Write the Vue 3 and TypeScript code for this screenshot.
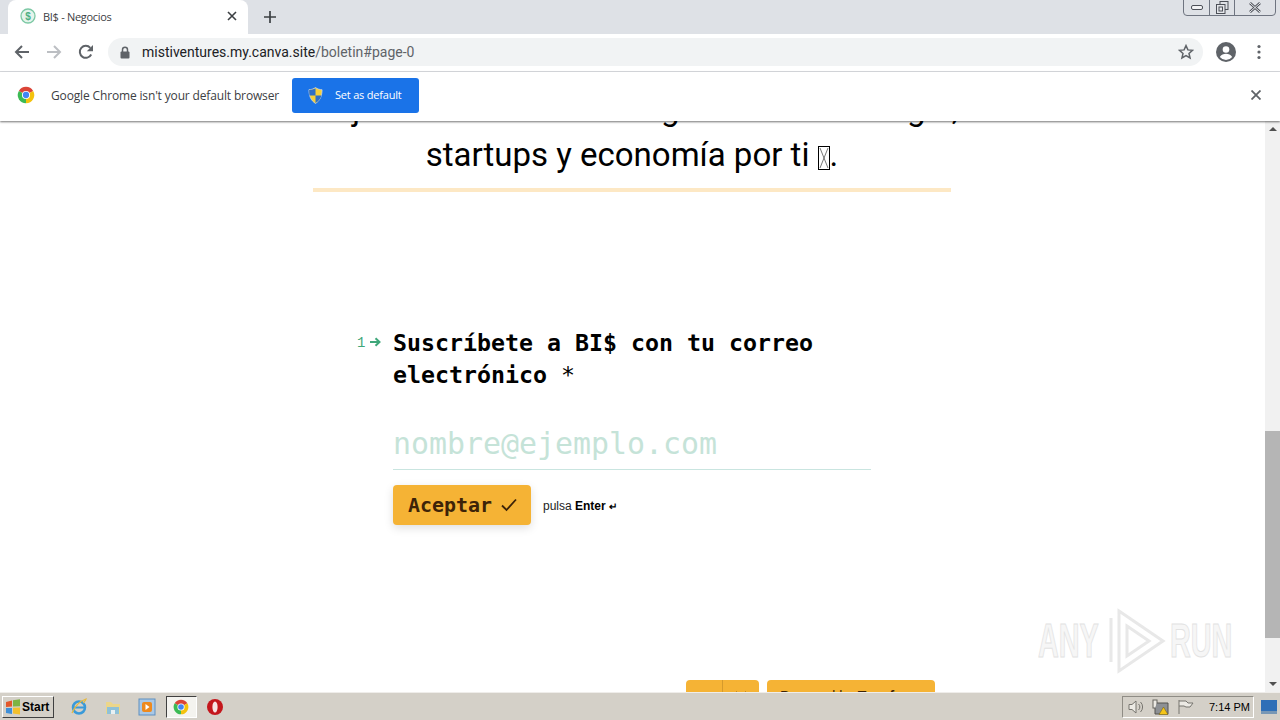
<script setup lang="ts">
const url = { host: 'mistiventures.my.canva.site', path: '/boletin#page-0' }
</script>

<template>
  <div class="screen">
    <header class="tabstrip">
      <div class="tab">
        <svg class="favicon" viewBox="0 0 16 16" width="16" height="16">
          <circle cx="8" cy="8" r="7" fill="#e4f4ec" stroke="#7cc8a4" stroke-width="1.3" />
          <text x="8" y="11.6" text-anchor="middle" class="fav-text">$</text>
        </svg>
        <span class="tab-title">BI$ - Negocios</span>
        <svg class="tab-close" viewBox="0 0 10 10" width="10" height="10">
          <path d="M1 1l8 8M9 1l-8 8" stroke="#3c4043" stroke-width="1.6" />
        </svg>
      </div>
      <svg class="new-tab" viewBox="0 0 12 12" width="12" height="12">
        <path d="M6 0v12M0 6h12" stroke="#3c4043" stroke-width="1.7" />
      </svg>
      <div class="win-controls">
        <div class="win-btn small">
          <svg viewBox="0 0 12 6" width="12" height="6"><rect x="0.5" y="0.5" width="11" height="4" rx="1.5" fill="#f2f3f5" stroke="#4c5058" /></svg>
        </div>
        <div class="win-btn small">
          <svg viewBox="0 0 13 13" width="13" height="13">
            <rect x="4" y="0.5" width="8" height="8" fill="none" stroke="#4c5058" />
            <rect x="0.5" y="3.5" width="8.5" height="9" fill="#e4e6ea" stroke="#4c5058" />
            <rect x="3" y="6" width="3.5" height="4" fill="none" stroke="#4c5058" />
          </svg>
        </div>
        <div class="win-btn wide">
          <svg viewBox="0 0 12 11" width="12" height="11">
            <path d="M1 1l10 9M11 1l-10 9" stroke="#4c5058" stroke-width="2.6" />
            <path d="M1 1l10 9M11 1l-10 9" stroke="#eceef1" stroke-width="1" />
          </svg>
        </div>
      </div>
    </header>

    <nav class="toolbar">
      <svg class="tb-icon" viewBox="0 0 16 16" width="16" height="16"><path d="M15 8H2.5M8 2L2 8l6 6" fill="none" stroke="#5f6368" stroke-width="2" /></svg>
      <svg class="tb-icon" viewBox="0 0 16 16" width="16" height="16"><path d="M1 8h12.5M8 2l6 6-6 6" fill="none" stroke="#bcbfc3" stroke-width="2" /></svg>
      <svg class="tb-icon" viewBox="0 0 16 16" width="16" height="16">
        <path d="M13.2 10.5A6 6 0 1 1 12.3 3.8" fill="none" stroke="#5f6368" stroke-width="2" />
        <path d="M15 1v6.2H8.800z" fill="#5f6368" />
      </svg>
      <div class="omnibox">
        <svg viewBox="0 0 10 13" width="10" height="13" class="lock">
          <path d="M2.500 6V3.800a2.500 2.500 0 0 1 5 0V6" fill="none" stroke="#5f6368" stroke-width="1.500" />
          <rect x="0.500" y="5.500" width="9" height="7" rx="1" fill="#5f6368" />
        </svg>
        <span class="url"><span class="url-host">{{ url.host }}</span><span class="url-path">{{ url.path }}</span></span>
        <svg class="star" viewBox="0 0 16 16" width="16" height="16">
          <path d="M8 1.600l1.900 4.300 4.600.4-3.500 3.100 1.050 4.600L8 11.600l-4.050 2.400L5 9.400 1.500 6.300l4.600-.4z" fill="none" stroke="#5f6368" stroke-width="1.500" />
        </svg>
      </div>
      <svg class="avatar" viewBox="0 0 20 20" width="20" height="20">
        <circle cx="10" cy="10" r="10" fill="#5f6368" />
        <circle cx="10" cy="7.500" r="3.300" fill="#fff" />
        <path d="M3.800 15c1.400-2.300 3.800-3.200 6.200-3.200s4.800.9 6.200 3.200a8 8 0 0 1-12.400 0z" fill="#fff" />
      </svg>
      <svg class="dots" viewBox="0 0 4 16" width="4" height="16">
        <circle cx="2" cy="2.500" r="1.600" fill="#5f6368" />
        <circle cx="2" cy="8" r="1.600" fill="#5f6368" />
        <circle cx="2" cy="13.500" r="1.600" fill="#5f6368" />
      </svg>
    </nav>

    <div class="infobar">
      <svg class="chrome-logo" viewBox="0 0 24 24" width="18" height="18">
        <path d="M12 12L2.470 6.500A11 11 0 0 1 21.530 6.500z" fill="#db4437" />
        <path d="M12 12L21.530 6.500A11 11 0 0 1 12 23z" fill="#f4c20d" />
        <path d="M12 12L12 23A11 11 0 0 1 2.470 6.500z" fill="#3cba54" />
        <circle cx="12" cy="12" r="5.400" fill="#fff" />
        <circle cx="12" cy="12" r="4.200" fill="#4285f4" />
      </svg>
      <span class="info-text">Google Chrome isn't your default browser</span>
      <button class="default-btn">
        <svg viewBox="0 0 16 18" width="15" height="17">
          <path d="M8 0.500C10 2 12.500 2.800 15 2.800c0 6.500-2 11.500-7 14.700C3 14.300 1 9.300 1 2.800 3.500 2.800 6 2 8 0.500z" fill="#f7d038" stroke="#c9d6e8" stroke-width="0.800" />
          <path d="M8 1.500V9H1.600C1.300 7 1.200 5 1.200 3 3.500 3 6 2.300 8 1.500zM8 9h6.300c-.8 3.400-3 6-6.300 8z" fill="#2f6fc6" />
        </svg>
        <span>Set as default</span>
      </button>
      <svg class="info-close" viewBox="0 0 10 10" width="10" height="10">
        <path d="M0.500 0.500l9 9M9.500 0.500l-9 9" stroke="#5f6368" stroke-width="1.800" />
      </svg>
    </div>

    <div class="viewport">
      <main class="page">
        <div class="intro">
          <h1 class="intro-text">
            Mejor leemos todo lo largo sobre tecnología,<br />
            startups y economía por ti
            <svg class="tofu" viewBox="0 0 12 24" width="12" height="24">
              <rect x="0.500" y="0.500" width="11" height="23" fill="none" stroke="#000" />
              <path d="M2 2l8 20M10 2L2 22" stroke="#555" stroke-width="0.800" />
            </svg>.
          </h1>
        </div>

        <section class="question">
          <div class="q-head">
            <span class="q-num">1</span>
            <svg class="q-arrow" viewBox="0 0 11 10" width="11" height="10">
              <path d="M0 5h9M5.500 1.200L9.500 5l-4 3.800" fill="none" stroke="#3fa77a" stroke-width="2" />
            </svg>
            <h2 class="q-title">Suscríbete a BI$ con tu correo electrónico <span class="req">*</span></h2>
          </div>
          <div class="answer">nombre@ejemplo.com</div>
          <div class="actions">
            <button class="submit">
              <span>Aceptar</span>
              <svg viewBox="0 0 16 14" width="16" height="14">
                <path d="M1 7.500l4.500 4.500L15 1.500" fill="none" stroke="#3d2308" stroke-width="1.800" />
              </svg>
            </button>
            <span class="hint">pulsa <b>Enter</b> <b class="enter-key">↵</b></span>
          </div>
        </section>

        <div class="form-footer">
          <div class="pager">
            <span class="pager-btn"><svg viewBox="0 0 12 8" width="12" height="8"><path d="M1 7l5-5 5 5" fill="none" stroke="#3d2308" stroke-width="1.500" /></svg></span>
            <span class="pager-btn"><svg viewBox="0 0 12 8" width="12" height="8"><path d="M1 1l5 5 5-5" fill="none" stroke="#3d2308" stroke-width="1.500" /></svg></span>
          </div>
          <div class="powered">Powered by <b>Typeform</b></div>
        </div>
      </main>

      <aside class="scrollbar">
        <div class="sb-arrow"><i class="tri up"></i></div>
        <div class="sb-track"><div class="sb-thumb"></div></div>
        <div class="sb-arrow"><i class="tri down"></i></div>
      </aside>

      <div class="watermark">
        <span class="wm-text">ANY</span>
        <svg class="wm-logo" viewBox="0 0 60 66" width="60" height="66">
          <path d="M4 10v44M12 3l44 30-44 30zM20 18l22 15-22 15z" fill="none" stroke="#e8e8e8" stroke-width="3" />
        </svg>
        <span class="wm-text">RUN</span>
      </div>
    </div>

    <footer class="taskbar">
      <button class="start">
        <svg viewBox="0 0 16 16" width="16" height="16">
          <path d="M1 3l6-1.500v6L1 8z" fill="#e2572b" />
          <path d="M8 1.300l7-1v7l-7 .3z" fill="#7db343" />
          <path d="M1 9l6 0v6l-6-1z" fill="#3f8fd8" />
          <path d="M8 8.800l7-.3v7l-7-1z" fill="#f3c02d" />
        </svg>
        <span>Start</span>
      </button>
      <div class="quick">
        <svg viewBox="0 0 18 18" width="18" height="18">
          <circle cx="9" cy="9.500" r="6" fill="none" stroke="#3a9ad9" stroke-width="2.500" />
          <path d="M4 9.500h10" stroke="#3a9ad9" stroke-width="2" />
          <path d="M2 15c3-7 8-12 14-14-1 3-2 3-3 4" fill="none" stroke="#e8b93c" stroke-width="1.200" />
        </svg>
        <svg viewBox="0 0 18 18" width="18" height="18">
          <path d="M2 4h5l2 2h7v10H2z" fill="#ecd68a" />
          <rect x="3" y="9" width="12" height="7" fill="#8fc1d8" />
          <rect x="7" y="12" width="4" height="4" fill="#e8f0f2" />
        </svg>
        <svg viewBox="0 0 18 18" width="18" height="18">
          <rect x="1" y="1" width="16" height="16" fill="#a9c8e6" stroke="#5e8fc0" />
          <rect x="4" y="4" width="10" height="10" rx="2" fill="#ee8a1e" />
          <path d="M7.500 6l4 3-4 3z" fill="#fff" />
        </svg>
        <span class="task-active">
          <svg viewBox="0 0 24 24" width="16" height="16">
            <path d="M12 12L2.470 6.500A11 11 0 0 1 21.530 6.500z" fill="#db4437" />
            <path d="M12 12L21.530 6.500A11 11 0 0 1 12 23z" fill="#f4c20d" />
            <path d="M12 12L12 23A11 11 0 0 1 2.470 6.500z" fill="#3cba54" />
            <circle cx="12" cy="12" r="5.400" fill="#fff" />
            <circle cx="12" cy="12" r="4.200" fill="#4285f4" />
          </svg>
        </span>
        <svg viewBox="0 0 18 18" width="18" height="18">
          <circle cx="9" cy="9" r="8" fill="#c4161c" />
          <ellipse cx="9" cy="9" rx="2.600" ry="5.600" fill="#f7e3e3" />
        </svg>
      </div>
      <div class="tray">
        <svg viewBox="0 0 18 16" width="18" height="16">
          <path d="M2 5.500h3l4-3.500v12L5 10.500H2z" fill="#eceae4" stroke="#77756f" />
          <path d="M11.500 5a4 4 0 0 1 0 6M13.500 3a7 7 0 0 1 0 10" fill="none" stroke="#77756f" />
        </svg>
        <svg viewBox="0 0 18 16" width="18" height="16">
          <rect x="1" y="1" width="4" height="8" fill="#eceae4" stroke="#66645e" />
          <path d="M5 4h11v11H3v-6" fill="#8d9094" stroke="#55534e" />
          <path d="M11.500 8l4.500 7.500H7z" fill="#f5c518" stroke="#6b5a10" stroke-width="0.500" />
        </svg>
        <svg viewBox="0 0 18 16" width="18" height="16">
          <path d="M2 1v14M2 2h7l2 2h5l-3 4 0 0H9L7 7H2" fill="#eceae4" stroke="#77756f" />
        </svg>
        <span class="clock">7:14 PM</span>
      </div>
      <div class="show-desktop">
        <svg viewBox="0 0 16 14" width="16" height="14">
          <rect x="0" y="0" width="16" height="11" fill="#2f6fb7" />
          <rect x="0" y="11" width="16" height="3" fill="#7897b5" />
        </svg>
      </div>
    </footer>
  </div>
</template>

<style>
html, body { margin: 0; padding: 0; overflow: hidden; }
</style>

<style scoped>
.screen {
  width: 1280px;
  height: 720px;
  display: flex;
  flex-direction: column;
  overflow: hidden;
  background: #fff;
  font-family: "Open Sans", "Noto Sans", sans-serif;
}

/* tab strip */
.tabstrip {
  height: 34px;
  flex: none;
  display: flex;
  align-items: flex-end;
  background: #dee1e6;
  position: relative;
}
.tab {
  width: 240px;
  height: 34px;
  margin-left: 8px;
  box-sizing: border-box;
  padding: 0 11px 2px 12px;
  background: #fff;
  border-radius: 8px 8px 0 0;
  display: flex;
  align-items: center;
}
.favicon { flex: none; }
.fav-text { font: 700 10px "Liberation Sans", sans-serif; fill: #4caf82; }
.tab-title {
  margin-left: 7px;
  flex: 1;
  font-size: 11px;
  letter-spacing: -0.3px;
  color: #3c4043;
  white-space: nowrap;
}
.new-tab { margin: 0 0 11px 16px; }
.win-controls {
  position: absolute;
  right: 4px;
  top: -1px;
  height: 17px;
  display: flex;
  border: 1px solid #6e7480;
  border-radius: 0 0 4px 4px;
  box-sizing: border-box;
}
.win-btn {
  display: flex;
  align-items: center;
  justify-content: center;
  border-left: 1px solid #6e7480;
}
.win-btn:first-child { border-left: 0; }
.win-btn.small { width: 25px; box-sizing: border-box; }
.win-btn.wide { width: 41px; box-sizing: border-box; }

/* toolbar */
.toolbar {
  height: 38px;
  flex: none;
  box-sizing: border-box;
  background: #fff;
  border-bottom: 1px solid #dadce0;
  display: flex;
  align-items: center;
  padding: 0 0 1px 14px;
  gap: 16px;
}
.omnibox {
  width: 1095px;
  height: 28px;
  margin-left: -2px;
  margin-right: -3px;
  box-sizing: border-box;
  padding: 0 9px 0 12px;
  border-radius: 14px;
  background: #f1f3f4;
  display: flex;
  align-items: center;
}
.lock { flex: none; }
.url {
  margin-left: 12px;
  flex: 1;
  font-family: "Roboto", sans-serif;
  font-size: 14px;
  white-space: nowrap;
}
.url-host { color: #202124; }
.url-path { color: #5f6368; }
.avatar { flex: none; }
.dots { flex: none; margin-left: 5px; }

/* infobar */
.infobar {
  height: 49px;
  flex: none;
  box-sizing: border-box;
  background: #fff;
  display: flex;
  align-items: center;
  padding: 0 19px 3px 17px;
  box-shadow: 0 1px 2px rgba(0, 0, 0, 0.55);
  position: relative;
  z-index: 2;
}
.info-text {
  margin-left: 16px;
  font-size: 12px;
  letter-spacing: -0.15px;
  color: #3c4043;
  white-space: nowrap;
}
.default-btn {
  margin-left: 13px;
  width: 127px;
  height: 35px;
  border: 0;
  border-radius: 3px;
  background: #1a73e8;
  color: #fff;
  display: flex;
  align-items: center;
  padding: 0 0 0 16px;
  font: 11px "Open Sans", sans-serif;
}
.default-btn span { margin: -2px 0 0 12px; letter-spacing: -0.2px; }
.info-close { margin-left: auto; }

/* page */
.viewport {
  flex: 1;
  min-height: 0;
  display: flex;
  position: relative;
}
.page {
  flex: 1;
  min-width: 0;
  overflow: hidden;
  box-sizing: border-box;
  padding-right: 1px;
  display: flex;
  flex-direction: column;
  align-items: center;
}
.intro {
  width: 638px;
  margin-top: -35px;
  padding-bottom: 10px;
  border-bottom: 4px solid #fde8c4;
  flex: none;
}
.intro-text {
  margin: 0 -20px;
  text-align: center;
  white-space: nowrap;
  font: 400 33px/46px "Roboto", sans-serif;
  color: #000;
}
.tofu { vertical-align: -4px; }

.question {
  width: 478px;
  margin-top: 136px;
  flex: none;
}
.q-head { position: relative; }
.q-num {
  position: absolute;
  left: -36px;
  top: 8px;
  font: 14px/16px "Liberation Mono", monospace;
  color: #3fa77a;
}
.q-arrow { position: absolute; left: -23px; top: 10px; }
.q-title {
  margin: -1px 0 1px;
  font: 700 23.25px/32px "DejaVu Sans Mono", monospace;
  color: #000;
}
.req { font-weight: 400; }
.answer {
  margin-top: 26px;
  height: 53px;
  box-sizing: border-box;
  border-bottom: 1px solid #c9e5e0;
  font: 300 29.9px/54px "DejaVu Sans Mono", monospace;
  color: #c5e3d8;
  overflow: hidden;
}
.actions {
  margin-top: 15px;
  display: flex;
  align-items: center;
}
.submit {
  width: 138px;
  height: 40px;
  box-sizing: border-box;
  border: 0;
  border-radius: 4px;
  padding: 0 0 0 15px;
  background: #f5b335;
  color: #3d2308;
  display: flex;
  align-items: center;
  gap: 9px;
  font: 700 19.93px "DejaVu Sans Mono", monospace;
  box-shadow: 0 3px 10px rgba(0, 0, 0, 0.13);
}
.hint {
  margin-left: 12px;
  margin-top: 2px;
  font: 12px "Liberation Sans", sans-serif;
  color: #222;
}
.hint b { color: #000; }
.enter-key { font-size: 10px; }

.form-footer {
  align-self: stretch;
  margin-top: 155px;
  padding-right: 329px;
  display: flex;
  justify-content: flex-end;
  gap: 8px;
  flex: none;
}
.pager {
  width: 73px;
  height: 36px;
  background: #f5b335;
  border-radius: 4px;
  display: flex;
  overflow: hidden;
}
.pager-btn {
  flex: 1;
  display: flex;
  justify-content: center;
  padding-top: 11px;
  box-sizing: border-box;
}
.pager-btn + .pager-btn { border-left: 1px solid #d59a2c; }
.powered {
  width: 168px;
  height: 36px;
  box-sizing: border-box;
  padding: 7px 0 0 13px;
  background: #f5b335;
  border-radius: 4px;
  font: 14px/18px "Liberation Sans", sans-serif;
  color: #3d2308;
  white-space: nowrap;
}

/* scrollbar */
.scrollbar {
  width: 15px;
  flex: none;
  display: flex;
  flex-direction: column;
  background: #f1f1f1;
}
.sb-arrow {
  height: 16px;
  flex: none;
  display: flex;
  align-items: center;
  justify-content: center;
}
.tri {
  width: 0;
  height: 0;
  border-left: 4px solid transparent;
  border-right: 4px solid transparent;
}
.tri.up { border-bottom: 4px solid #505050; }
.tri.down { border-top: 4px solid #505050; }
.sb-track { flex: 1; padding-top: 294px; box-sizing: border-box; }
.sb-thumb { height: 207px; background: #b5b5b5; }

/* watermark */
.watermark {
  position: absolute;
  left: 1038px;
  top: 487px;
  display: flex;
  align-items: center;
  height: 66px;
  pointer-events: none;
}
.wm-logo { margin: 0 3px 0 7px; flex: none; }
.wm-text {
  width: 62px;
  font: 700 48px/1 "Liberation Sans", sans-serif;
  color: #f6f6f6;
  -webkit-text-stroke: 1px #e2e2e2;
  display: inline-block;
  white-space: nowrap;
  transform: scaleX(0.6);
  transform-origin: left center;
}

/* taskbar */
.taskbar {
  height: 28px;
  flex: none;
  box-sizing: border-box;
  background: #d4d0c8;
  border-top: 1px solid #efedea;
  display: flex;
  align-items: center;
  position: relative;
  z-index: 3;
}
.start {
  margin-left: 2px;
  width: 52px;
  height: 22px;
  box-sizing: border-box;
  padding: 0 0 0 2px;
  background: #d4d0c8;
  border: 1px solid;
  border-color: #fff #404040 #404040 #fff;
  display: flex;
  align-items: center;
  gap: 1px;
  font: 700 12px "Liberation Sans", sans-serif;
  color: #000;
}
.quick {
  margin-left: 16px;
  display: flex;
  align-items: center;
  gap: 16px;
}
.task-active {
  width: 31px;
  height: 22px;
  margin: 0 -6.5px;
  box-sizing: border-box;
  background: #f4f3ef;
  border: 1px solid;
  border-color: #404040 #fff #fff #404040;
  display: flex;
  align-items: center;
  justify-content: center;
}
.tray {
  margin-left: auto;
  width: 132px;
  height: 22px;
  box-sizing: border-box;
  padding-left: 4px;
  border: 1px solid;
  border-color: #8f8c85 #fff #fff #8f8c85;
  display: flex;
  align-items: center;
  gap: 7px;
}
.clock {
  margin-left: 7px;
  font: 11px "Liberation Sans", sans-serif;
  color: #000;
  white-space: nowrap;
}
.show-desktop {
  width: 26px;
  flex: none;
  box-sizing: border-box;
  padding-right: 3px;
  display: flex;
  justify-content: flex-end;
}
</style>
